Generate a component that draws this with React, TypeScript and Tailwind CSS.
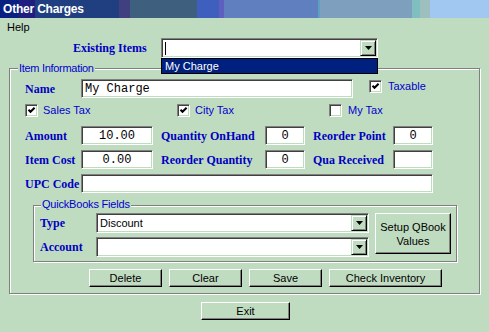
import React from "react";

const SANS = "font-['Liberation_Sans',Arial,sans-serif]";
const SERIF = "font-['Liberation_Serif','Times_New_Roman',serif]";
const MONO = "font-['Liberation_Mono','Courier_New',monospace]";

const sunken =
  "bg-white border border-t-[#808080] border-l-[#808080] border-b-white border-r-white shadow-[inset_1px_1px_0_#404040,inset_-1px_-1px_0_#c0dcc0]";
const raised =
  "bg-[#c0dcc0] border border-t-white border-l-white border-b-black border-r-black shadow-[inset_-1px_-1px_0_#808080]";

function Lbl({ className = "", children }: { className?: string; children: React.ReactNode }) {
  return (
    <span className={`${SERIF} shrink-0 whitespace-nowrap text-[12px] font-bold leading-[14px] text-[#0000c0] ${className}`}>
      {children}
    </span>
  );
}

function Field({ className = "", center = false, children }: { className?: string; center?: boolean; children?: React.ReactNode }) {
  return (
    <div
      className={`${sunken} ${MONO} flex h-[19px] shrink-0 items-center text-[12px] leading-[14px] text-black ${center ? "justify-center" : "pl-[3px]"} ${className}`}
    >
      {children}
    </div>
  );
}

function Arrow() {
  return (
    <svg width="7" height="4" viewBox="0 0 7 4">
      <path d="M0 0H7L3.5 4Z" fill="#000" />
    </svg>
  );
}

function Combo({ className = "", children }: { className?: string; children?: React.ReactNode }) {
  return (
    <div className={`${sunken} flex h-[20px] shrink-0 items-stretch p-[1px] ${className}`}>
      <div className={`${SANS} flex flex-1 items-center pl-[2px] text-[11px] text-black`}>{children}</div>
      <div className="flex w-[16px] items-center justify-center border border-t-[#c0dcc0] border-l-[#c0dcc0] border-b-black border-r-black bg-[#c0dcc0] shadow-[inset_1px_1px_0_#fff,inset_-1px_-1px_0_#808080]">
        <Arrow />
      </div>
    </div>
  );
}

function Check({ checked, className = "" }: { checked?: boolean; className?: string }) {
  return (
    <div className={`${sunken} flex h-[13px] w-[13px] shrink-0 items-center justify-center ${className}`}>
      {checked && (
        <svg width="9" height="9" viewBox="0 0 9 9">
          <path d="M1.5 3.8L3.5 5.8L7.6 1.7" stroke="#000" strokeWidth="2" fill="none" />
        </svg>
      )}
    </div>
  );
}

function Btn({ className = "", children }: { className?: string; children: React.ReactNode }) {
  return (
    <div className={`${raised} ${SANS} flex shrink-0 items-center justify-center text-center text-[11px] leading-[14px] text-black ${className}`}>
      {children}
    </div>
  );
}

const blue = "text-[#0000d0]";

export default function App() {
  const blocks = [
    ["w-[19px]", "bg-[#0a2080]"],
    ["w-[16px]", "bg-[#201f80]"],
    ["w-[84px]", "bg-[#203f80]"],
    ["w-[11px]", "bg-[#403f80]"],
    ["w-[67px]", "bg-[#3f5f7f]"],
    ["w-[22px]", "bg-[#3f5fbf]"],
    ["w-[5px]", "bg-[#5f5fbf]"],
    ["w-[94px]", "bg-[#5f7fbf]"],
    ["w-[2px]", "bg-[#5f9fbf]"],
    ["w-[92px]", "bg-[#7f9fbf]"],
    ["w-[8px]", "bg-[#7fbfbf]"],
    ["w-[10px]", "bg-[#9fbfbf]"],
    ["w-[59px]", "bg-[#a0c8f0]"],
  ];
  return (
    <div className="relative h-[332px] w-[489px] overflow-hidden bg-[#c0dcc0]">
      {/* Title bar */}
      <div className="relative flex h-[18px]">
        {blocks.map(([w, c], i) => (
          <div key={i} className={`${w} ${c} h-full`} />
        ))}
        <span className={`${SANS} absolute left-[3px] top-[2px] text-[12px] font-bold leading-[14px] tracking-[-0.2px] text-white`}>
          Other Charges
        </span>
      </div>
      {/* Menu */}
      <div className={`${SANS} flex h-[18px] items-center pl-[7px] text-[11px] text-black`}>Help</div>

      {/* Existing items */}
      <div className="mt-[2px] flex h-[20px] items-center">
        <Lbl className="ml-[73px] w-[88px]">Existing Items</Lbl>
        <Combo className="w-[217px]">
          <div className="h-[13px] w-[1px] bg-black" />
        </Combo>
      </div>

      {/* Item Information group */}
      <div className="relative ml-[9px] mt-[10px] flex h-[226px] w-[471px] flex-col border border-[#808080] shadow-[inset_1px_1px_0_#fff,1px_1px_0_#fff]">
        <span className={`${SANS} ${blue} absolute left-[8px] top-[-8px] bg-[#c0dcc0] px-[1px] text-[11px] leading-[14px] tracking-[-0.3px]`}>
          Item Information
        </span>

        {/* Name */}
        <div className="mt-[10px] flex h-[19px] items-center pl-[15px]">
          <Lbl className="w-[56px]">Name</Lbl>
          <Field className="w-[272px]">My Charge</Field>
          <Check checked className="ml-[16px] mb-[4px]" />
          <span className={`${SANS} ${blue} mb-[4px] ml-[6px] text-[11px]`}>Taxable</span>
        </div>

        {/* Tax checkboxes */}
        <div className="mt-[6px] flex h-[13px] items-center pl-[15px]">
          <div className="flex w-[152px] items-center">
            <Check checked />
            <span className={`${SANS} ${blue} ml-[5px] text-[11px]`}>Sales Tax</span>
          </div>
          <div className="flex w-[152px] items-center">
            <Check checked />
            <span className={`${SANS} ${blue} ml-[5px] text-[11px]`}>City Tax</span>
          </div>
          <div className="flex items-center">
            <Check />
            <span className={`${SANS} ${blue} ml-[6px] text-[11px]`}>My Tax</span>
          </div>
        </div>

        {/* Amount */}
        <div className="mt-[9px] flex h-[19px] items-center pl-[15px]">
          <Lbl className="w-[56px]">Amount</Lbl>
          <Field center className="w-[72px]">10.00</Field>
          <Lbl className="ml-[8px] w-[104px]">Quantity OnHand</Lbl>
          <Field center className="w-[40px]">0</Field>
          <Lbl className="ml-[8px] w-[80px]">Reorder Point</Lbl>
          <Field center className="w-[40px]">0</Field>
        </div>

        {/* Item Cost */}
        <div className="mt-[5px] flex h-[19px] items-center pl-[15px]">
          <Lbl className="w-[56px]">Item Cost</Lbl>
          <Field center className="w-[72px]">0.00</Field>
          <Lbl className="ml-[8px] w-[104px]">Reorder Quantity</Lbl>
          <Field center className="w-[40px]">0</Field>
          <Lbl className="ml-[8px] w-[80px]">Qua Received</Lbl>
          <Field center className="w-[40px]" />
        </div>

        {/* UPC */}
        <div className="mt-[5px] flex h-[19px] items-center pl-[15px]">
          <Lbl className="w-[56px]">UPC Code</Lbl>
          <Field className="w-[352px]" />
        </div>

        {/* QuickBooks group */}
        <div className="relative ml-[23px] mt-[12px] flex h-[57px] w-[424px] border border-[#808080] shadow-[inset_1px_1px_0_#fff,1px_1px_0_#fff]">
          <span className={`${SANS} ${blue} absolute left-[7px] top-[-9px] bg-[#c0dcc0] px-[1px] text-[11px] leading-[14px] tracking-[-0.2px]`}>
            QuickBooks Fields
          </span>
          <div className="ml-[6px] mt-[7px] flex flex-col gap-[4px]">
            <div className="flex items-center">
              <Lbl className="w-[56px]">Type</Lbl>
              <Combo className="w-[273px]">Discount</Combo>
            </div>
            <div className="flex items-center">
              <Lbl className="w-[56px]">Account</Lbl>
              <Combo className="w-[273px]" />
            </div>
          </div>
          <Btn className="ml-[6px] mt-[7px] h-[41px] w-[76px]">
            Setup QBook
            <br />
            Values
          </Btn>
        </div>

        {/* Buttons */}
        <div className="ml-[79px] mt-[7px] flex h-[18px] gap-[7px]">
          <Btn className="w-[73px]">Delete</Btn>
          <Btn className="w-[73px]">Clear</Btn>
          <Btn className="w-[73px]">Save</Btn>
          <Btn className="w-[113px]">Check Inventory</Btn>
        </div>
      </div>

      {/* Exit */}
      <div className="ml-[201px] mt-[8px] flex">
        <Btn className="h-[18px] w-[89px]">Exit</Btn>
      </div>

      {/* Open dropdown list */}
      <div className={`${SANS} absolute left-[161px] top-[58px] flex h-[16px] w-[217px] items-center border border-black bg-[#00207f] pl-[3px] text-[11px] text-white`}>
        My Charge
      </div>
    </div>
  );
}
